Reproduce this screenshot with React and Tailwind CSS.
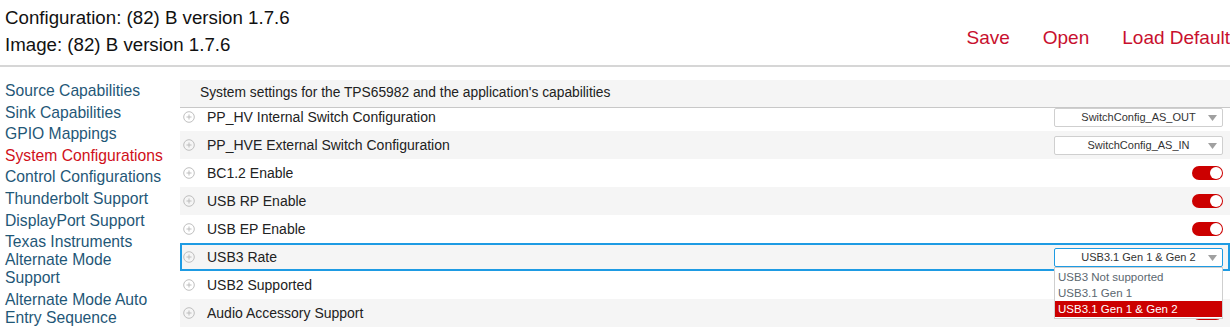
import React from 'react';

const navItems = [
  { label: 'Source Capabilities' },
  { label: 'Sink Capabilities' },
  { label: 'GPIO Mappings' },
  { label: 'System Configurations', active: true },
  { label: 'Control Configurations' },
  { label: 'Thunderbolt Support' },
  { label: 'DisplayPort Support' },
  { label: 'Texas Instruments Alternate Mode Support' },
  { label: 'Alternate Mode Auto Entry Sequence' },
];

const rows = [
  { label: 'PP_HV Internal Switch Configuration', type: 'select', value: 'SwitchConfig_AS_OUT' },
  { label: 'PP_HVE External Switch Configuration', type: 'select', value: 'SwitchConfig_AS_IN' },
  { label: 'BC1.2 Enable', type: 'toggle' },
  { label: 'USB RP Enable', type: 'toggle' },
  { label: 'USB EP Enable', type: 'toggle' },
  { label: 'USB3 Rate', type: 'select', value: 'USB3.1 Gen 1 & Gen 2', open: true },
  { label: 'USB2 Supported', type: 'toggle' },
  { label: 'Audio Accessory Support', type: 'toggle' },
];

const usb3Options = ['USB3 Not supported', 'USB3.1 Gen 1', 'USB3.1 Gen 1 & Gen 2'];

const PlusIcon = () => (
  <svg width="12" height="12" viewBox="0 0 12 12" className="shrink-0">
    <circle cx="6" cy="6" r="5.3" fill="none" stroke="#b8b8b8" strokeWidth="0.9" />
    <path d="M6 3.5v5M3.5 6h5" stroke="#b8b8b8" strokeWidth="0.9" />
  </svg>
);

const Toggle = () => (
  <div className="w-[31px] h-[14px] rounded-full bg-[#cc0000] flex items-center justify-end pr-[1px]">
    <div className="w-[12px] h-[12px] rounded-full bg-white" />
  </div>
);

const Select = ({ value, open }) => (
  <div
    className={`relative w-[169px] h-[19px] bg-white border rounded-[2px] flex items-center justify-center text-[11px] text-[#333] ${
      open ? 'border-[#1e9be3]' : 'border-[#cfcfcf]'
    }`}
  >
    <span>{value}</span>
    <svg width="9" height="6" viewBox="0 0 9 6" className="absolute right-[5px] top-[6px]">
      <path d="M0 0h9L4.5 6z" fill="#a0a0a0" />
    </svg>
    {open && (
      <ul className="absolute left-[-1px] top-[18px] w-[169px] bg-white border border-[#cfcfcf] py-[1px] z-10 text-[11.5px]">
        {usb3Options.map((opt, i) => (
          <li
            key={opt}
            className={`h-[16px] leading-[16px] pl-[3px] ${
              i === usb3Options.length - 1 ? 'bg-[#cc0000] text-white' : 'text-[#5b6770]'
            }`}
          >
            {opt}
          </li>
        ))}
      </ul>
    )}
  </div>
);

export default function App() {
  return (
    <div className="w-[1230px] h-[332px] overflow-hidden bg-white text-[#222] font-['Liberation_Sans',Arial,sans-serif]">
      {/* Top bar */}
      <div className="h-[67px] flex items-start justify-between border-b-2 border-[#d6d6d6]">
        <div className="pl-[5px] pt-[4px] text-[18.7px] leading-[27px] text-[#111]">
          <div>Configuration: (82) B version 1.7.6</div>
          <div>Image: (82) B version 1.7.6</div>
        </div>
        <div className="flex gap-[33px] pt-[24px] text-[19px] text-[#c8102e] whitespace-nowrap">
          <span>Save</span>
          <span>Open</span>
          <span>Load Default</span>
        </div>
      </div>

      <div className="flex">
        {/* Sidebar nav */}
        <aside className="w-[180px] shrink-0 pl-[5px] pr-[14px] pt-[15px] flex flex-col gap-[3.6px]">
          {navItems.map((item) => (
            <div
              key={item.label}
              className={`text-[15.7px] leading-[18px] ${item.active ? 'text-[#d0101a]' : 'text-[#1f5777]'}`}
            >
              {item.label}
            </div>
          ))}
        </aside>

        {/* Settings panel */}
        <main className="flex-1 min-w-0 pt-[13px]">
          <div className="h-[28px] bg-[#f5f5f5] border-b border-[#c8c8c8] pl-[20px] flex items-center text-[13.8px] text-[#222]">
            System settings for the TPS65982 and the application's capabilities
          </div>
          <div className="h-[230px] overflow-hidden">
            <div className="-mt-[5px]">
              {rows.map((row, i) => (
                <div
                  key={row.label}
                  className={`relative h-[28px] flex items-center pl-[3px] pr-[7px] ${
                    i % 2 === 1 ? 'bg-[#f5f5f5]' : 'bg-white'
                  } ${row.open ? 'ring-2 ring-inset ring-[#1e9be3] z-10' : ''}`}
                >
                  <PlusIcon />
                  <span className="ml-[12px] text-[14px] text-[#222]">{row.label}</span>
                  <div className="ml-auto">
                    {row.type === 'select' ? <Select value={row.value} open={row.open} /> : <Toggle />}
                  </div>
                </div>
              ))}
            </div>
          </div>
        </main>
      </div>
    </div>
  );
}
